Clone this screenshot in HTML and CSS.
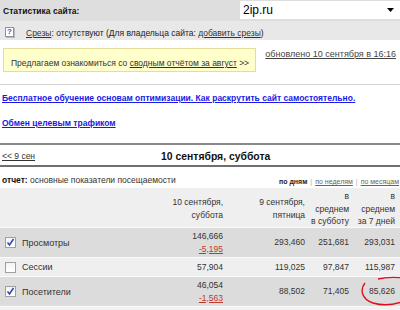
FILE: index.html
```html
<!DOCTYPE html>
<html lang="ru">
<head>
<meta charset="utf-8">
<link rel="stylesheet" href="styles.css">
</head>
<body>
<div class="top">
  <div class="top-row">
    <span class="title">Статистика сайта:</span>
    <div class="select"><span class="sel-val">2ip.ru</span><svg class="sel-arrow" width="7" height="4" viewBox="0 0 7 4"><path d="M0 0H7L3.5 4Z" fill="#000"/></svg></div>
  </div>
  <div class="slices"><span class="qicon">?</span><a href="#">Срезы</a>: отсутствуют (Для владельца сайта: <a href="#">добавить срезы</a>)</div>
</div>
<div class="promo-row">
  <div class="promo">Предлагаем ознакомиться со <a href="#">сводным отчётом за август</a> &gt;&gt;</div>
  <a class="updated" href="#">обновлено 10 сентября в 16:16</a>
</div>
<div class="links">
  <a href="#">Бесплатное обучение основам оптимизации. Как раскрутить сайт самостоятельно.</a>
  <a href="#">Обмен целевым трафиком</a>
</div>
<div class="datenav">
  <a href="#">&lt;&lt; 9 сен</a>
  <b class="cur-date">10 сентября, суббота</b>
</div>
<div class="report-head">
  <span><b>отчет:</b> основные показатели посещаемости</span>
  <span class="periods"><b>по дням</b><span class="sep">|</span><a href="#">по неделям</a><span class="sep">|</span><a href="#">по месяцам</a></span>
</div>
<div class="stats">
  <div class="srow head">
    <div></div>
    <div class="c">10 сентября,<br>суббота</div>
    <div class="c">9 сентября,<br>пятница</div>
    <div class="c">в<br>среднем<br>в субботу</div>
    <div class="c">в<br>среднем<br>за 7 дней</div>
  </div>
  <div class="srow dark tall">
    <label class="lbl"><span class="cb on"><svg width="9" height="9" viewBox="0 0 9 9"><path d="M1.5 4.5L3.5 7L7.5 1" fill="none" stroke="#2d4bb8" stroke-width="1.6"/></svg></span>Просмотры</label>
    <div class="c">146,666<br><a class="neg" href="#">-5,195</a></div>
    <div class="c">293,460</div>
    <div class="c">251,681</div>
    <div class="c">293,031</div>
  </div>
  <div class="srow light">
    <label class="lbl"><span class="cb"></span>Сессии</label>
    <div class="c">57,904</div>
    <div class="c">119,025</div>
    <div class="c">97,847</div>
    <div class="c">115,987</div>
  </div>
  <div class="srow dark tall">
    <label class="lbl"><span class="cb on"><svg width="9" height="9" viewBox="0 0 9 9"><path d="M1.5 4.5L3.5 7L7.5 1" fill="none" stroke="#2d4bb8" stroke-width="1.6"/></svg></span>Посетители</label>
    <div class="c">46,054<br><a class="neg" href="#">-1,563</a></div>
    <div class="c">88,502</div>
    <div class="c">71,405</div>
    <div class="c">85,626</div>
  </div>
  <div class="srow tail"></div>
</div>
<svg class="circle" width="46" height="32" viewBox="0 0 46 32"><path d="M7 7C2 13 3 23 15 27C25 30 36 29 46 25" fill="none" stroke="#e0101a" stroke-width="1.4"/><path d="M20 3C28 1 37 1 46 2" fill="none" stroke="#e0101a" stroke-width="1.4"/></svg>
</body>
</html>
```
FILE: styles.css
```css
* { box-sizing: border-box; }
body {
  margin: 0;
  width: 400px;
  height: 310px;
  overflow: hidden;
  font-family: "Liberation Sans", Arial, sans-serif;
  font-size: 8.5px;
  color: #222;
  background: #fff;
  position: relative;
}
a { color: #333; }

.top { background: #e4e4e4; }
.top-row {
  height: 21px;
  display: flex;
  align-items: center;
  justify-content: space-between;
  padding-left: 3px;
  background: #dedede;
}
.title { font-weight: bold; color: #111; }
.select {
  width: 160px;
  height: 18px;
  background: #fff;
  display: flex;
  align-items: center;
  justify-content: space-between;
  padding: 0 6px 0 3px;
  align-self: flex-start;
  margin-top: 1px;
}
.sel-val { font-size: 12px; color: #000; }
.slices {
  height: 19px;
  padding: 6px 0 0 5px;
  line-height: 12px;
  color: #222;
  background: #e8e8e8;
  white-space: nowrap;
}
.slices a { color: #333; }
.qicon {
  display: inline-block;
  vertical-align: 2px;
  width: 9px;
  height: 10px;
  border: 1px solid #8393b0;
  background: #fff;
  box-shadow: 1px 1px 0 #b8b8b8;
  font-size: 8px;
  line-height: 8px;
  text-align: center;
  font-weight: bold;
  color: #3a56a8;
  margin-right: 12px;
}

.promo-row {
  display: flex;
  justify-content: space-between;
  align-items: flex-start;
  padding: 8px 4px 0 3px;
  height: 45px;
  border-bottom: 1px solid #d6d6d6;
}
.promo {
  width: 253px;
  height: 24px;
  background: #ffffcc;
  border: 1px solid #e6dc9c;
  padding: 9px 0 0 7px;
  color: #333;
  white-space: nowrap;
}
.updated { margin-top: 1px; color: #444; font-size: 9px; }

.links {
  display: flex;
  flex-direction: column;
  align-items: flex-start;
  gap: 15px;
  padding: 8px 0 0 2px;
  height: 60px;
  border-bottom: 2px solid #8a8a8a;
}
.links a { color: #1a1ae6; font-weight: bold; }

.datenav {
  height: 22px;
  display: flex;
  align-items: center;
  padding: 2px 0 0 2px;
  border-bottom: 2px solid #6e6e6e;
}
.datenav a { color: #333; }
.cur-date { margin-left: 126px; font-size: 10.4px; color: #111; }

.report-head {
  height: 21px;
  display: flex;
  justify-content: space-between;
  align-items: flex-end;
  padding: 0 1px 3px 2px;
  color: #333;
}
.report-head b { color: #111; }
.periods { font-size: 7px; }
.periods b { color: #222; }
.periods a { color: #666; }
.sep { color: #aaa; margin: 0 3px; }

.srow {
  display: grid;
  grid-template-columns: 1fr 85px 80px 44px 46px;
  padding-right: 5px;
  align-items: center;
  border-bottom: 1px solid #fafafa;
}
.srow .c { text-align: right; line-height: 12.5px; color: #333; }
.srow .c:nth-child(2) { padding-right: 2px; }
.head { height: 40px; background: #efefef; padding-top: 2px; }
.dark { background: #dcdcdc; }
.light { background: #efefef; height: 19px; }
.tall { height: 30px; }
.tail { height: 10px; background: #f2f2f2; border: 0; }
.lbl { display: flex; align-items: center; padding-left: 5px; color: #333; font-size: 9px; }
.cb {
  width: 11px;
  height: 11px;
  border: 1px solid #a0a0a0;
  background: linear-gradient(#f4f4f4, #ffffff);
  display: inline-flex;
  align-items: center;
  justify-content: center;
  margin-right: 6px;
}
.neg { color: #c0392b; }

.circle { position: absolute; left: 358px; top: 276px; }
```
